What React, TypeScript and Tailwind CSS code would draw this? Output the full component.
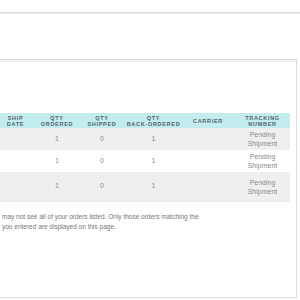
import React from "react";

const headers = [
  ["SHIP", "DATE"],
  ["QTY", "ORDERED"],
  ["QTY", "SHIPPED"],
  ["QTY", "BACK-ORDERED"],
  ["CARRIER"],
  ["TRACKING", "NUMBER"],
];

const rows = [
  { bg: "bg-[#efefef]", h: "h-[22px]" },
  { bg: "bg-white", h: "h-[22px]" },
  { bg: "bg-[#efefef]", h: "h-[29px]" },
];

export default function App() {
  return (
    <div
      className="w-[300px] h-[300px] overflow-hidden bg-white"
      style={{ fontFamily: '"Liberation Sans", Arial, sans-serif' }}
    >
      <div className="h-[12px]" />
      <div className="h-[1px] bg-[#dcdcdc]" />
      <div className="h-[1px] bg-[#ececec]" />
      <div className="h-[45px]" />
      <div className="-ml-[20px] w-[317px] h-[239px] border border-[#dcdcdc] pl-[14px] pr-[6px]">
        <div className="h-[2px] bg-[#f3f3f3] -ml-[14px] -mr-[6px]" />
        <div className="h-[51px]" />
        <div className="grid grid-cols-[41px_42px_48px_55px_54px_55px] h-[15px] bg-[#c2ecee]">
          {headers.map((h, i) => (
            <div
              key={i}
              className="flex flex-col items-center justify-center text-[5.5px] font-bold leading-[6px] tracking-[0.7px] text-[#52636a]"
            >
              {h.map((t) => (
                <span key={t}>{t}</span>
              ))}
            </div>
          ))}
        </div>
        {rows.map((r, i) => (
          <div
            key={i}
            className={`grid grid-cols-[41px_42px_48px_55px_54px_55px] ${r.h} ${r.bg} text-[7px] text-[#8c8c8c]`}
          >
            <div />
            <div className="flex items-center justify-center">1</div>
            <div className="flex items-center justify-center">0</div>
            <div className="flex items-center justify-center">1</div>
            <div />
            <div className="flex flex-col items-center justify-center leading-[9px]">
              <span>Pending</span>
              <span>Shipment</span>
            </div>
          </div>
        ))}
        <div className="h-[1px] bg-[#e8e8e8]" />
        <div className="h-[10px]" />
        <div className="ml-[7px] text-[6.5px] leading-[10px] text-[#777] whitespace-nowrap">
          <div>may not see all of your orders listed. Only those orders matching the</div>
          <div>you entered are displayed on this page.</div>
        </div>
      </div>
    </div>
  );
}
